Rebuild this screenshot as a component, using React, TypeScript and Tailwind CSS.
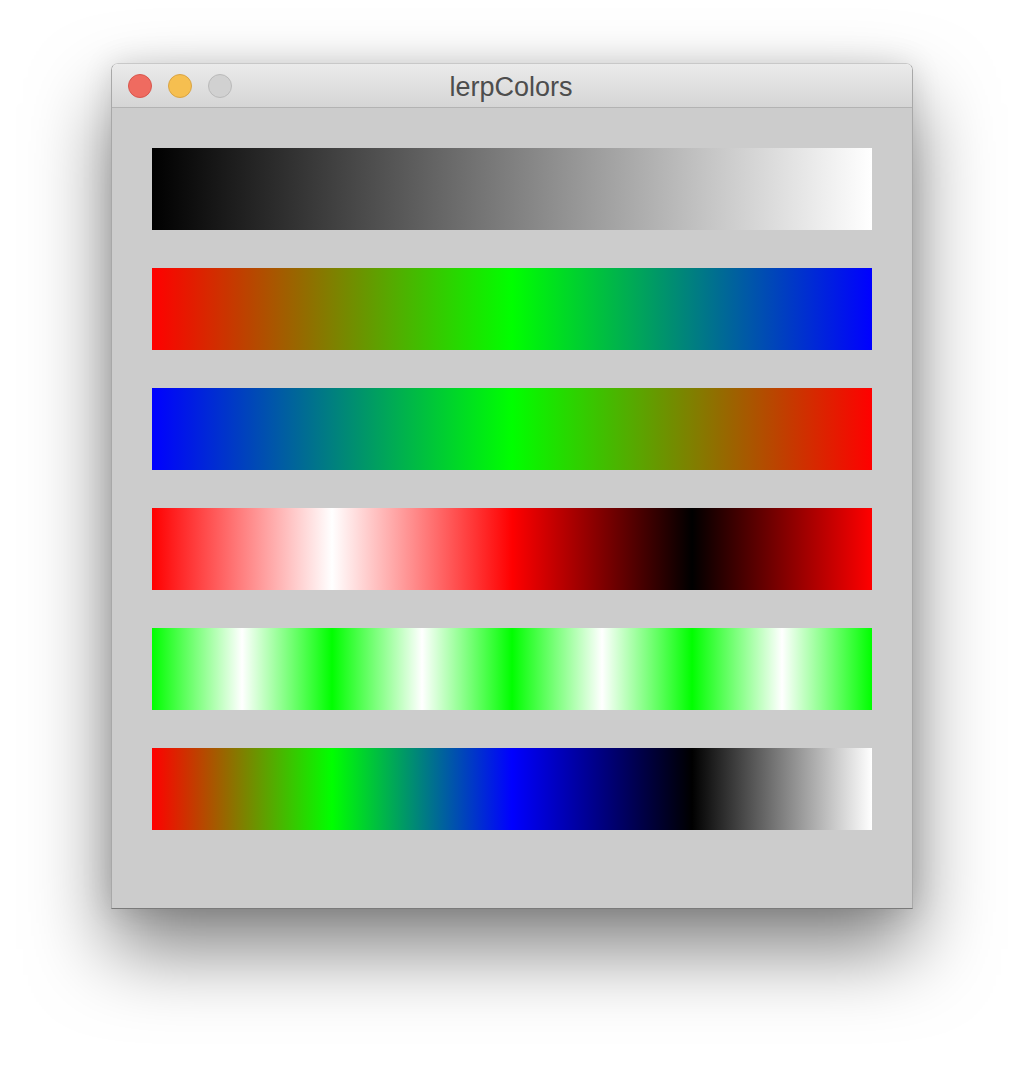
const rows = [
  "bg-[linear-gradient(to_right,#000,#fff)]",
  "bg-[linear-gradient(to_right,#f00,#0f0,#00f)]",
  "bg-[linear-gradient(to_right,#00f,#0f0,#f00)]",
  "bg-[linear-gradient(to_right,#f00,#fff,#f00,#000,#f00)]",
  "bg-[linear-gradient(to_right,#0f0,#fff,#0f0,#fff,#0f0,#fff,#0f0,#fff,#0f0)]",
  "bg-[linear-gradient(to_right,#f00,#0f0,#00f,#000,#fff)]",
]

const TrafficLights = () => (
  <div className="flex items-center gap-4 pl-4">
    <span className="w-6 h-6 rounded-full bg-[#ef6b60] border border-[#d8564d]" />
    <span className="w-6 h-6 rounded-full bg-[#f6bf50] border border-[#d9a444]" />
    <span className="w-6 h-6 rounded-full bg-[#d1d1d1] border border-[#bababa]" />
  </div>
)

const App = () => {
  return (
    <div className="min-h-[1068px] bg-white flex justify-center pt-[63px] font-['Liberation_Sans',Arial,sans-serif]">
      <div className="w-[802px] h-[846px] flex flex-col rounded-t-[7px] border border-[#a8a8a8] border-t-[#c8c8c8] border-b-[#7a7a7a] overflow-hidden shadow-[0_40px_80px_0_rgba(0,0,0,0.5),0_0_30px_rgba(0,0,0,0.12)]">
        <div className="h-[44px] shrink-0 grid grid-cols-[1fr_auto_1fr] items-center border-b border-[#b3b3b3] bg-[linear-gradient(to_bottom,#ebebeb,#d5d5d5)]">
          <TrafficLights />
          <h1 className="text-[27px] leading-none text-[#4d4d4d] -translate-x-[1px] translate-y-[2px]">lerpColors</h1>
          <div />
        </div>
        <div className="h-[800px] bg-[#cccccc] flex flex-col gap-[38px] px-10 pt-10">
          {rows.map((cls) => (
            <div key={cls} className={`w-[720px] h-[82px] ${cls}`} />
          ))}
        </div>
      </div>
    </div>
  )
}

export default App
